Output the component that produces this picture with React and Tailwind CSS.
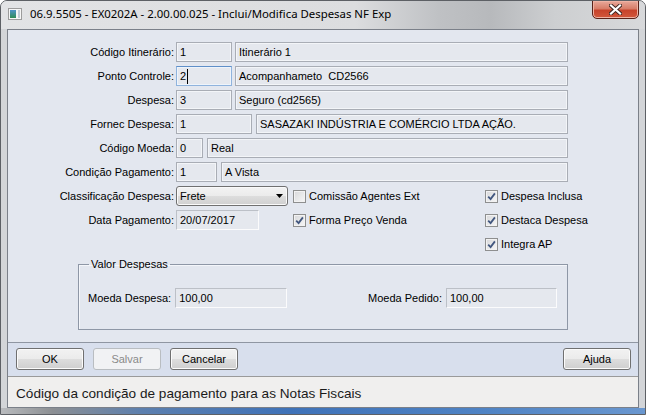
import React from "react";

const UI = "font-['Liberation_Sans',Arial,sans-serif] text-[11px] text-black leading-[13px]";

function TextBox({ className = "", children, kind = "edit", caret = false }) {
  const kinds = {
    edit: "border border-[#a9adb5] shadow-[inset_0_0_0_1px_#f3f5f8]",
    focus: "border border-[#8fb3dd] border-t-[#5f8fc8] shadow-[inset_0_0_0_1px_#eef4fb]",
    flat: "border border-t-[#bcc0c7] border-l-[#bcc0c7] border-b-[#fbfbfc] border-r-[#fbfbfc]",
  };
  return (
    <div
      className={`h-[20px] shrink-0 flex items-center pl-[3px] whitespace-pre overflow-hidden bg-[#e5e8ee] ${kinds[kind]} ${className}`}
    >
      {children}
      {caret && <span className="w-[1px] h-[15px] bg-black ml-[1px]" />}
    </div>
  );
}

function Check({ checked, children }) {
  return (
    <div className="flex items-center gap-[3px]">
      <div className="w-[13px] h-[13px] shrink-0 border border-[#8e8f8f] bg-[linear-gradient(135deg,#d7d8da,#f7f7f7)] shadow-[inset_0_0_0_1px_#f2f2f2] flex items-center justify-center">
        {checked && (
          <svg width="9" height="9" viewBox="0 0 9 9">
            <path d="M1.2 4.6 L3.6 7.1 L7.9 1.4" fill="none" stroke="#42577f" strokeWidth="1.8" />
          </svg>
        )}
      </div>
      <span>{children}</span>
    </div>
  );
}

function Btn({ children, disabled }) {
  if (disabled) {
    return (
      <div className="w-[68px] h-[22px] rounded-[3px] border border-[#b9bdc1] bg-[#f1f2f4] text-[#8a8a8a] flex items-center justify-center">
        {children}
      </div>
    );
  }
  return (
    <div className="w-[68px] h-[22px] rounded-[3px] border border-[#707070] bg-[linear-gradient(#f2f2f2_0%,#ebebeb_50%,#dddddd_51%,#cfcfcf_100%)] shadow-[inset_0_0_0_1px_#fbfbfb] flex items-center justify-center">
      {children}
    </div>
  );
}

function Row({ label, children }) {
  return (
    <div className="flex items-center h-[20px]">
      <span className="w-[166px] shrink-0 text-right">{label}</span>
      <div className="flex items-center ml-[2px]">{children}</div>
    </div>
  );
}

export default function App() {
  return (
    <div className="w-[646px] h-[415px] bg-white">
      <div className="w-[646px] h-[415px] rounded-t-[7px] border border-[#5d6065] bg-[#d3d5d8] flex flex-col overflow-hidden">
        {/* caption */}
        <div className="h-[28px] shrink-0 flex items-start bg-[linear-gradient(90deg,#e2e3e5_0%,#dcdddf_55%,#bfc1c4_68%,#b7b9bc_76%,#cdcfd1_86%,#d8d9db_100%)]">
          <svg width="14" height="12" viewBox="0 0 14 12" className="ml-[7px] mt-[7px] shrink-0">
            <defs>
              <linearGradient id="appIcon" x1="0" y1="0" x2="0" y2="1">
                <stop offset="0" stopColor="#4f93c9" />
                <stop offset="1" stopColor="#2f8d55" />
              </linearGradient>
            </defs>
            <rect x="0.5" y="0.5" width="13" height="11" fill="#f6f6f6" stroke="#9c9c9c" />
            <rect x="2" y="2" width="6" height="8" fill="url(#appIcon)" />
            <rect x="10" y="2" width="2" height="8" fill="#c3ccd6" />
          </svg>
          <span className="ml-[8px] mt-[5px] font-['Noto_Sans',sans-serif] text-[11.4px] leading-[16px] text-black whitespace-nowrap">
            06.9.5505 - EX0202A - 2.00.00.025 - Inclui/Modifica Despesas NF Exp
          </span>
          <div className="ml-auto mr-[6px] mt-[-1px] w-[47px] h-[19px] rounded-b-[5px] border border-[#5a2219] bg-[linear-gradient(#e9a99b_0%,#d77d68_45%,#c7432b_55%,#d2583c_100%)] shadow-[inset_0_0_0_1px_#efb3a4] flex items-center justify-center">
            <svg width="13" height="11" viewBox="0 0 13 11">
              <path d="M2 1.5 L11 9.5 M11 1.5 L2 9.5" stroke="#3c2622" strokeWidth="4" strokeLinecap="square" />
              <path d="M2 1.5 L11 9.5 M11 1.5 L2 9.5" stroke="#ffffff" strokeWidth="2.2" strokeLinecap="square" />
            </svg>
          </div>
        </div>

        {/* client area */}
        <div className="flex-1 px-[6px]">
          <div className={`h-[379px] border border-[#7b8089] flex flex-col ${UI}`}>
            {/* form */}
            <div className="h-[312px] shrink-0 bg-[#e3e7ef] pt-[12px] flex flex-col">
              <div className="flex flex-col gap-[4px]">
                <Row label="Código Itinerário:">
                  <TextBox className="w-[56px]">1</TextBox>
                  <TextBox className="w-[333px] ml-[3px]">Itinerário 1</TextBox>
                </Row>
                <Row label="Ponto Controle:">
                  <TextBox className="w-[56px]" kind="focus" caret>2</TextBox>
                  <TextBox className="w-[333px] ml-[3px]">{"Acompanhameto  CD2566"}</TextBox>
                </Row>
                <Row label="Despesa:">
                  <TextBox className="w-[56px]">3</TextBox>
                  <TextBox className="w-[333px] ml-[3px]">Seguro (cd2565)</TextBox>
                </Row>
                <Row label="Fornec Despesa:">
                  <TextBox className="w-[76px]">1</TextBox>
                  <TextBox className="w-[312px] ml-[4px]">SASAZAKI INDÚSTRIA E COMÉRCIO LTDA AÇÃO.</TextBox>
                </Row>
                <Row label="Código Moeda:">
                  <TextBox className="w-[27px]">0</TextBox>
                  <TextBox className="w-[361px] ml-[4px]">Real</TextBox>
                </Row>
                <Row label="Condição Pagamento:">
                  <TextBox className="w-[41px]">1</TextBox>
                  <TextBox className="w-[347px] ml-[4px]">A Vista</TextBox>
                </Row>
                <Row label="Classificação Despesa:">
                  <div className="w-[117px] shrink-0">
                    <div className="w-[112px] h-[20px] rounded-[3px] border border-[#707070] bg-[linear-gradient(#f3f3f3_0%,#ebebeb_50%,#dddddd_51%,#d0d0d0_100%)] shadow-[inset_0_0_0_1px_#fafafa] flex items-center justify-between pl-[3px] pr-[4px]">
                      <span>Frete</span>
                      <svg width="7" height="4" viewBox="0 0 7 4">
                        <path d="M0 0 H7 L3.5 4 Z" fill="#000" />
                      </svg>
                    </div>
                  </div>
                  <div className="w-[192px] shrink-0">
                    <Check>Comissão Agentes Ext</Check>
                  </div>
                  <Check checked>Despesa Inclusa</Check>
                </Row>
                <Row label="Data Pagamento:">
                  <div className="w-[117px] shrink-0">
                    <TextBox className="w-[83px]" kind="flat">20/07/2017</TextBox>
                  </div>
                  <div className="w-[192px] shrink-0">
                    <Check checked>Forma Preço Venda</Check>
                  </div>
                  <Check checked>Destaca Despesa</Check>
                </Row>
                <Row label="">
                  <div className="w-[309px] shrink-0" />
                  <Check checked>Integra AP</Check>
                </Row>
              </div>

              <fieldset className="ml-[70px] mt-[4px] w-[490px] border border-[#8e97a6] shadow-[inset_1px_1px_0_#f4f6fa]">
                <legend className="ml-[10px] px-[2px]">Valor Despesas</legend>
                <div className="mt-[17px] mb-[21px] pl-[9px] pr-[10px] flex items-center justify-between">
                  <div className="flex items-center gap-[4px]">
                    <span>Moeda Despesa:</span>
                    <TextBox className="w-[112px]" kind="flat">100,00</TextBox>
                  </div>
                  <div className="flex items-center gap-[4px]">
                    <span>Moeda Pedido:</span>
                    <TextBox className="w-[111px]" kind="flat">100,00</TextBox>
                  </div>
                </div>
              </fieldset>
            </div>

            {/* button bar */}
            <div className="h-[34px] shrink-0 border-t border-[#8f96a2] bg-[#d8dfed] flex items-start pt-[5px] pl-[8px] pr-[7px]">
              <div className="flex gap-[9px]">
                <Btn>OK</Btn>
                <Btn disabled>Salvar</Btn>
                <Btn>Cancelar</Btn>
              </div>
              <div className="ml-auto">
                <Btn>Ajuda</Btn>
              </div>
            </div>

            {/* status line */}
            <div className="flex-1 border-t border-[#9a9a9a] bg-[#f0efee] flex items-center pl-[8px] pt-[2px] text-[13.6px] text-[#1a1a1a]">
              Código da condição de pagamento para as Notas Fiscais
            </div>
          </div>
        </div>

        {/* lower frame edge */}
        <div className="h-[6px] shrink-0 bg-[linear-gradient(90deg,#b9bbbe_0%,#8c8f93_8%,#5c7fae_22%,#3f72b8_45%,#4f83c4_75%,#6a97cf_100%)]" />
      </div>
    </div>
  );
}
